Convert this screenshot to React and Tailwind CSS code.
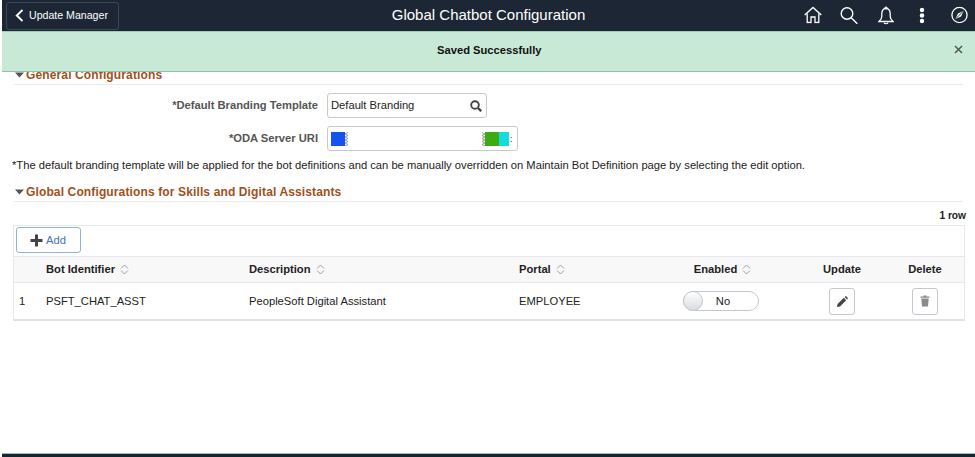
import React from "react";

const F = { fontFamily: '"Liberation Sans", Arial, sans-serif' };
const COLS = "grid grid-cols-[32px_203px_270px_125px_154px_88px_1fr]";

function Sort() {
  return (
    <svg width="9" height="11" viewBox="0 0 9 11" fill="none" stroke="#888" strokeWidth="0.8" className="ml-[5px] shrink-0">
      <path d="M1 4.5 L4.5 1 L8 4.5" />
      <path d="M1 6.5 L4.5 10 L8 6.5" />
    </svg>
  );
}

function Caret() {
  return (
    <svg width="9" height="6" viewBox="0 0 9 6" className="shrink-0">
      <path d="M0 0.5 H9 L4.5 5.5 Z" fill="#555" />
    </svg>
  );
}

function SectionTitle({ children }) {
  return (
    <div className="flex items-center gap-[2px] h-[17px] border-b border-[#e9ebef] pl-[1px] text-[12px] tracking-[0.13px] font-bold text-[#a0501c] box-content pb-[1px]">
      <Caret />
      <span>{children}</span>
    </div>
  );
}

function Head({ children, sort, className = "" }) {
  return (
    <div className={"flex items-center text-[11.2px] font-bold text-[#222] " + className}>
      <span>{children}</span>
      {sort && <Sort />}
    </div>
  );
}

function Jag({ flip }) {
  return (
    <svg width="3" height="14" viewBox="0 0 3 14" fill="none" stroke="#999" strokeWidth="1" className="shrink-0" style={flip ? { transform: "scaleX(-1)" } : undefined}>
      <path d="M0 0.5 L3 2 L0 3.5 L3 5 L0 6.5 L3 8 L0 9.5 L3 11 L0 12.5 L3 14" />
    </svg>
  );
}

export default function App() {
  return (
    <div style={F} className="w-[975px] h-[457px] bg-white flex flex-col overflow-hidden pl-[2px] text-[#222]">
      <header className="h-[31px] shrink-0 bg-[#1c2634] grid grid-cols-[1fr_auto_1fr] items-center text-white">
        <button className="ml-[4px] w-[113px] h-[28px] rounded-[3px] border border-[#3c4654] flex items-center pl-[8px] gap-[5px] text-[10.6px]">
          <svg width="9" height="13" viewBox="0 0 9 13" fill="none" stroke="#fff" strokeWidth="1.9">
            <path d="M7.5 1 L1.8 6.5 L7.5 12" />
          </svg>
          <span>Update Manager</span>
        </button>
        <div className="text-center text-[15px] whitespace-nowrap">Global Chatbot Configuration</div>
        <div className="flex items-center justify-end pr-[7px] -translate-y-[0.5px]">
          <svg width="18" height="17" viewBox="0 0 18 17" fill="none" stroke="#fff" strokeWidth="1.3" className="mr-[18px]">
            <path d="M0.7 8.5 L9 1 L17.3 8.5" />
            <path d="M3.2 7 V16 H7 V10.5 H11 V16 H14.8 V7" />
          </svg>
          <svg width="18" height="18" viewBox="0 0 18 18" fill="none" stroke="#fff" strokeWidth="1.4" className="mr-[20px]">
            <circle cx="7" cy="7" r="5.8" />
            <path d="M11.2 11.2 L17.3 17.3" />
          </svg>
          <svg width="16" height="18" viewBox="0 0 16 18" fill="none" stroke="#fff" strokeWidth="1.3" className="mr-[25px]">
            <path d="M8 2 C4.8 2 3.8 4.4 3.8 7.2 V10 C3.8 12 2.6 13.4 1 15 H15 C13.4 13.4 12.2 12 12.2 10 V7.2 C12.2 4.4 11.2 2 8 2 Z" />
            <circle cx="8" cy="1.2" r="0.9" />
            <path d="M6 16.3 C6.6 17.6 9.4 17.6 10 16.3" />
          </svg>
          <svg width="6" height="16" viewBox="0 0 6 16" fill="#fff" className="mr-[26px]">
            <circle cx="3" cy="2.5" r="2.2" />
            <circle cx="3" cy="8" r="2.2" />
            <circle cx="3" cy="13.5" r="2.2" />
          </svg>
          <svg width="17" height="17" viewBox="0 0 17 17" fill="none" stroke="#fff" strokeWidth="1.3">
            <circle cx="8.5" cy="8.5" r="7.6" />
            <path d="M12.8 4.2 L10 10 L4.2 12.8 L7 7 Z" fill="#fff" stroke="none" />
            <path d="M12.8 4.2 L4.2 12.8" stroke="#1c2634" strokeWidth="0.9" />
          </svg>
        </div>
      </header>

      <div className="h-[41px] shrink-0 bg-[#c8e9d6] border-b border-[#8fc3a6] border-t border-t-[#9fcfb3] flex items-center justify-between pb-[2px] pl-[435px] pr-[12px] relative z-10 text-[11.2px] font-bold text-[#111]">
        <span>Saved Successfully</span>
        <svg width="9" height="9" viewBox="0 0 9 9" stroke="#555" strokeWidth="1.5" className="mb-[3px]">
          <path d="M1 1 L8 8 M8 1 L1 8" />
        </svg>
      </div>

      <main className="flex-1 min-h-0 flex flex-col">
        <div className="h-[13px] overflow-hidden mx-[12px] shrink-0">
          <div className="-mt-[6px]">
            <SectionTitle>General Configurations</SectionTitle>
          </div>
        </div>

        <div className="flex items-center mt-[8px] h-[25px]">
          <div className="w-[317px] text-right text-[11.2px] font-bold text-[#555] pr-[1px]">*Default Branding Template</div>
          <div className="ml-[8px] w-[160px] h-[25px] rounded-[3px] border border-[#c6cad0] flex items-center justify-between pl-[3px] pr-[4px] text-[11.2px]">
            <span>Default Branding</span>
            <svg width="12" height="12" viewBox="0 0 12 12" fill="none" stroke="#444" strokeWidth="1.9">
              <circle cx="5" cy="5" r="3.8" />
              <path d="M8 8 L11.2 11.2" strokeWidth="2.4" />
            </svg>
          </div>
        </div>

        <div className="flex items-center mt-[8px] h-[25px]">
          <div className="w-[317px] text-right text-[11.2px] font-bold text-[#555] pr-[1px]">*ODA Server URI</div>
          <div className="ml-[8px] w-[191px] h-[25px] rounded-[3px] border border-[#c6cad0] flex items-center pl-[3px]">
            <div className="w-[14px] h-[14px] bg-[#1553f0]" />
            <Jag flip />
            <div className="w-[134px]" />
            <Jag />
            <div className="w-[14px] h-[14px] bg-[#3cab12]" />
            <div className="w-[10px] h-[14px] bg-[#12dcdc]" />
            <div className="ml-[1px] text-[9px] text-[#333] leading-[14px]">:</div>
          </div>
        </div>

        <p className="mt-[7px] ml-[10px] text-[11.2px] leading-[14px] text-[#222] whitespace-nowrap">
          *The default branding template will be applied for the bot definitions and can be manually overridden on Maintain Bot Definition page by selecting the edit option.
        </p>

        <div className="mx-[12px] mt-[11px]">
          <SectionTitle>Global Configurations for Skills and Digital Assistants</SectionTitle>
        </div>

        <div className="mr-[9px] mt-[7px] h-[14px] text-right text-[10.2px] font-bold leading-[14px] text-[#222]">1 row</div>

        <section className="ml-[11px] mr-[10px] mt-[2px] border border-[#e6e8ec] border-b-2 border-b-[#dfe2e7]">
          <div className="h-[30px] flex items-start pl-[2px] pt-[1px]">
            <button className="w-[65px] h-[26px] rounded-[3px] border border-[#8fb3dc] flex items-center gap-[3px] pl-[13px] text-[11.2px] text-[#3f72b8]">
              <svg width="13" height="13" viewBox="0 0 13 13" fill="#444">
                <path d="M5 0.5 H8 V5 H12.5 V8 H8 V12.5 H5 V8 H0.5 V5 H5 Z" />
              </svg>
              <span>Add</span>
            </button>
          </div>
          <div className={COLS + " h-[27px] bg-[#f8f8f9] border-y border-[#e6e8ec] items-center"}>
            <div />
            <Head sort>Bot Identifier</Head>
            <Head sort>Description</Head>
            <Head sort>Portal</Head>
            <Head sort className="justify-center pl-[3px]">Enabled</Head>
            <Head className="justify-center">Update</Head>
            <Head className="justify-center">Delete</Head>
          </div>
          <div className={COLS + " h-[36px] items-center text-[11.2px] text-[#222]"}>
            <div className="pl-[5px]">1</div>
            <div>PSFT_CHAT_ASST</div>
            <div>PeopleSoft Digital Assistant</div>
            <div>EMPLOYEE</div>
            <div className="flex justify-center">
              <div className="w-[76px] h-[20px] rounded-full border border-[#c4c8ce] flex items-center relative bg-white">
                <div className="absolute left-[-1px] top-[-1px] w-[20px] h-[20px] rounded-full border border-[#c4c8ce] bg-gradient-to-b from-white to-[#d8dbe0]" />
                <span className="w-full text-center pl-[4px]">No</span>
              </div>
            </div>
            <div className="flex justify-center">
              <div className="w-[26px] h-[27px] rounded-[3px] border border-[#c4c8ce] flex items-center justify-center">
                <svg width="11" height="11" viewBox="0 0 11 11" fill="#444">
                  <path d="M0 11 L0.6 8 L6.8 1.8 L9.2 4.2 L3 10.4 Z" />
                  <path d="M7.6 1 L8.4 0.3 Q8.8 0 9.2 0.3 L10.7 1.8 Q11 2.2 10.7 2.6 L10 3.4 Z" />
                </svg>
              </div>
            </div>
            <div className="flex justify-center">
              <div className="w-[26px] h-[27px] rounded-[3px] border border-[#c4c8ce] flex items-center justify-center">
                <svg width="10" height="12" viewBox="0 0 10 12" fill="#8a8a8a">
                  <path d="M3.5 0.5 H6.5 V1.5 H9.5 V2.8 H0.5 V1.5 H3.5 Z" />
                  <path d="M1.3 3.5 H8.7 L8 11.5 H2 Z" />
                </svg>
              </div>
            </div>
          </div>
        </section>

        <div className="flex-1" />
        <div className="h-[4px] bg-[#12282f] border-t border-[#a9b4b8] shrink-0" />
      </main>
    </div>
  );
}
